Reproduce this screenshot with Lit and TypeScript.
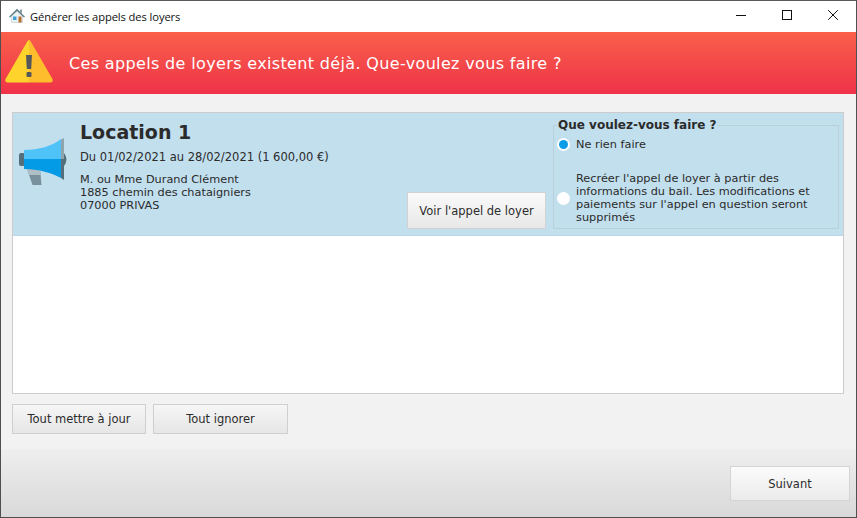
import { LitElement, html, css } from "lit";
import { customElement } from "lit/decorators.js";

@customElement("app-root")
export class AppRoot extends LitElement {
  static styles = css`
    :host { display: block; width: 857px; height: 518px; overflow: hidden; font-family: "DejaVu Sans", Verdana, sans-serif; font-size: 11.5px; color: #2b2b2b; }
    .win { box-sizing: border-box; width: 857px; height: 518px; border: 1px solid #4f4f4f; border-top-color: #5a5a5a; display: flex; flex-direction: column; background: #f2f2f2; }
    .titlebar { height: 31px; flex: none; background: #fff; display: flex; align-items: center; padding-left: 8px; font-family: "Open Sans", "Noto Sans", sans-serif; font-size: 11.2px; color: #111; }
    .titlebar svg.house { margin-bottom: 2px; }
    .titlebar .t { margin-left: 5px; flex: 1; letter-spacing: -0.1px; }
    .wbtn { width: 46px; height: 28px; align-self: flex-start; display: flex; align-items: center; justify-content: center; }
    .banner { height: 62px; flex: none; background: linear-gradient(#f9604a, #ef3249); display: flex; align-items: center; }
    .banner svg { margin: 0 0 2px 4px; flex: none; }
    .banner .msg { margin-left: 16px; color: #fff; font-size: 16px; letter-spacing: 0.35px; }
    .main { flex: 1; padding: 18px 12px 0 11px; display: flex; flex-direction: column; min-height: 0; }
    .list { height: 282px; flex: none; box-sizing: border-box; border: 1px solid #cccccc; background: #fff; }
    .item { height: 123px; box-sizing: border-box; background: #c2dfee; border-bottom: 1px dotted #b5d0de; display: flex; }
    .ico { width: 67px; flex: none; padding: 25px 0 0 6px; box-sizing: border-box; }
    .info { width: 327px; flex: none; padding-top: 7px; }
    h2 { margin: 0; font-size: 19px; line-height: 24px; font-weight: bold; color: #2b2b2b; }
    .period { margin-top: 6px; line-height: 14px; }
    .addr { margin-top: 9px; line-height: 13px; font-size: 11.3px; }
    .vbtn-col { width: 146px; flex: none; display: flex; align-items: flex-end; padding-bottom: 6px; box-sizing: border-box; }
    .btn { box-sizing: border-box; display: flex; align-items: center; justify-content: center; border: 1px solid #d2d2d4; background: linear-gradient(#fafafa, #e8e8e8); color: #2b2b2b; font-size: 11.5px; }
    .vbtn { width: 139px; height: 37px; }
    fieldset { margin: 0; width: 286px; height: 110px; box-sizing: border-box; align-self: flex-end; margin-bottom: 6px; border: 1px solid #b9d0dc; padding: 0 4px 0 3px; min-inline-size: 0; }
    legend { padding: 0 2px 0 1px; margin-left: 0; font-weight: bold; font-size: 12px; line-height: 13px; color: #2b2b2b; }
    .opt { display: flex; align-items: center; gap: 6px; line-height: 13px; font-size: 11.3px; }
    .o1 { height: 22px; margin-top: 1px; }
    .o2 { margin-top: 17px; }
    .radio { width: 13px; height: 13px; border-radius: 50%; background: #fff; flex: none; display: flex; align-items: center; justify-content: center; }
    .radio i { width: 9px; height: 9px; border-radius: 50%; background: #0a9ce8; }
    .row { display: flex; gap: 7px; margin-top: 10px; }
    .rbtn { width: 134px; height: 30px; background: linear-gradient(#f6f6f6, #e6e6e6); border-color: #cfcfd3; }
    .rbtn.b { width: 135px; }
    .footer { height: 68px; flex: none; background: linear-gradient(#eeeeee, #d9d9d9); display: flex; justify-content: flex-end; padding: 17px 6px 0 0; box-sizing: border-box; }
    .next { width: 120px; height: 35px; background: linear-gradient(#fbfbfb, #ebebeb); border-color: #d4d4d6; }
  `;

  render() {
    return html`<div class="win">
      <div class="titlebar">
        <svg class="house" width="16" height="16" viewBox="0 0 16 16">
          <path d="M2.500 8 8 3l5.500 5v6.500h-11z" fill="#eef1f2" stroke="#b4bcc1" stroke-width=".5"/>
          <path d="M0 8.800 8 .8l8 8-1 .7L8 3 1 9.500z" fill="#5d7b89"/>
          <path d="M11 1.500h2v4l-2-2z" fill="#8a9aa2"/>
          <rect x="9.500" y="8.500" width="3" height="6" fill="#b5702c"/>
          <rect x="4" y="8.500" width="3.500" height="3.500" fill="#3f9fdc"/>
        </svg>
        <span class="t">Générer les appels des loyers</span>
        <div class="wbtn"><svg width="10" height="10" viewBox="0 0 10 10"><path d="M0 5.500h10" stroke="#111" fill="none"/></svg></div>
        <div class="wbtn"><svg width="10" height="10" viewBox="0 0 10 10"><rect x=".5" y=".5" width="9" height="9" stroke="#111" fill="none"/></svg></div>
        <div class="wbtn"><svg width="10" height="10" viewBox="0 0 10 10"><path d="M.2.200l9.600 9.600M9.800.200l-9.600 9.600" stroke="#111" fill="none"/></svg></div>
      </div>
      <div class="banner">
        <svg width="48" height="44" viewBox="0 0 48 44">
          <path d="M24 0 Q25 0 26 2 L47.500 39 Q48.500 42.500 45.500 42.500 L24 42.500z" fill="#fdbd2c"/>
          <path d="M24 0 Q23 0 22 2 L.5 39 Q-.5 42.500 2.500 42.500 L24 42.500z" fill="#fdd32c"/>
          <path d="M21 15 h6 l-.8 14 h-4.400z" fill="#55585a"/>
          <rect x="21.500" y="32" width="5" height="5" rx="1" fill="#55585a"/>
        </svg>
        <span class="msg">Ces appels de loyers existent déjà. Que-voulez vous faire ?</span>
      </div>
      <div class="main">
        <div class="list">
          <div class="item">
            <div class="ico">
              <svg width="48" height="48" viewBox="0 0 48 48">
                <path d="M8 31 H21 L22.500 47 H13.500z" fill="#78909c"/>
                <path d="M8 31 H21 L21.500 37 H10z" fill="#b0bec5"/>
                <rect x="0" y="15" width="6" height="13" rx="2" fill="#546e7a"/>
                <path d="M45 15 q5 6.500 0 13z" fill="#546e7a"/>
                <path d="M5 12 C20 12 33 8 42 1 V21 H5z" fill="#4fc3f7"/>
                <path d="M5 21 H42 V40 C33 35 20 31 5 31z" fill="#039be5"/>
                <path d="M42 1.500 L45 0 V21 H42z" fill="#90a4ae"/>
                <path d="M42 21 H45 V42 L42 40z" fill="#546e7a"/>
              </svg>
            </div>
            <div class="info">
              <h2>Location 1</h2>
              <div class="period">Du 01/02/2021 au 28/02/2021 (1 600,00 €)</div>
              <div class="addr">M. ou Mme Durand Clément<br>1885 chemin des chataigniers<br>07000 PRIVAS</div>
            </div>
            <div class="vbtn-col"><div class="btn vbtn">Voir l'appel de loyer</div></div>
            <fieldset>
              <legend>Que voulez-vous faire ?</legend>
              <div class="opt o1"><span class="radio"><i></i></span><span>Ne rien faire</span></div>
              <div class="opt o2"><span class="radio"></span><span>Recréer l'appel de loyer à partir des informations du bail. Les modifications et paiements sur l'appel en question seront supprimés</span></div>
            </fieldset>
          </div>
        </div>
        <div class="row">
          <div class="btn rbtn">Tout mettre à jour</div>
          <div class="btn rbtn b">Tout ignorer</div>
        </div>
      </div>
      <div class="footer"><div class="btn next">Suivant</div></div>
    </div>`;
  }
}
